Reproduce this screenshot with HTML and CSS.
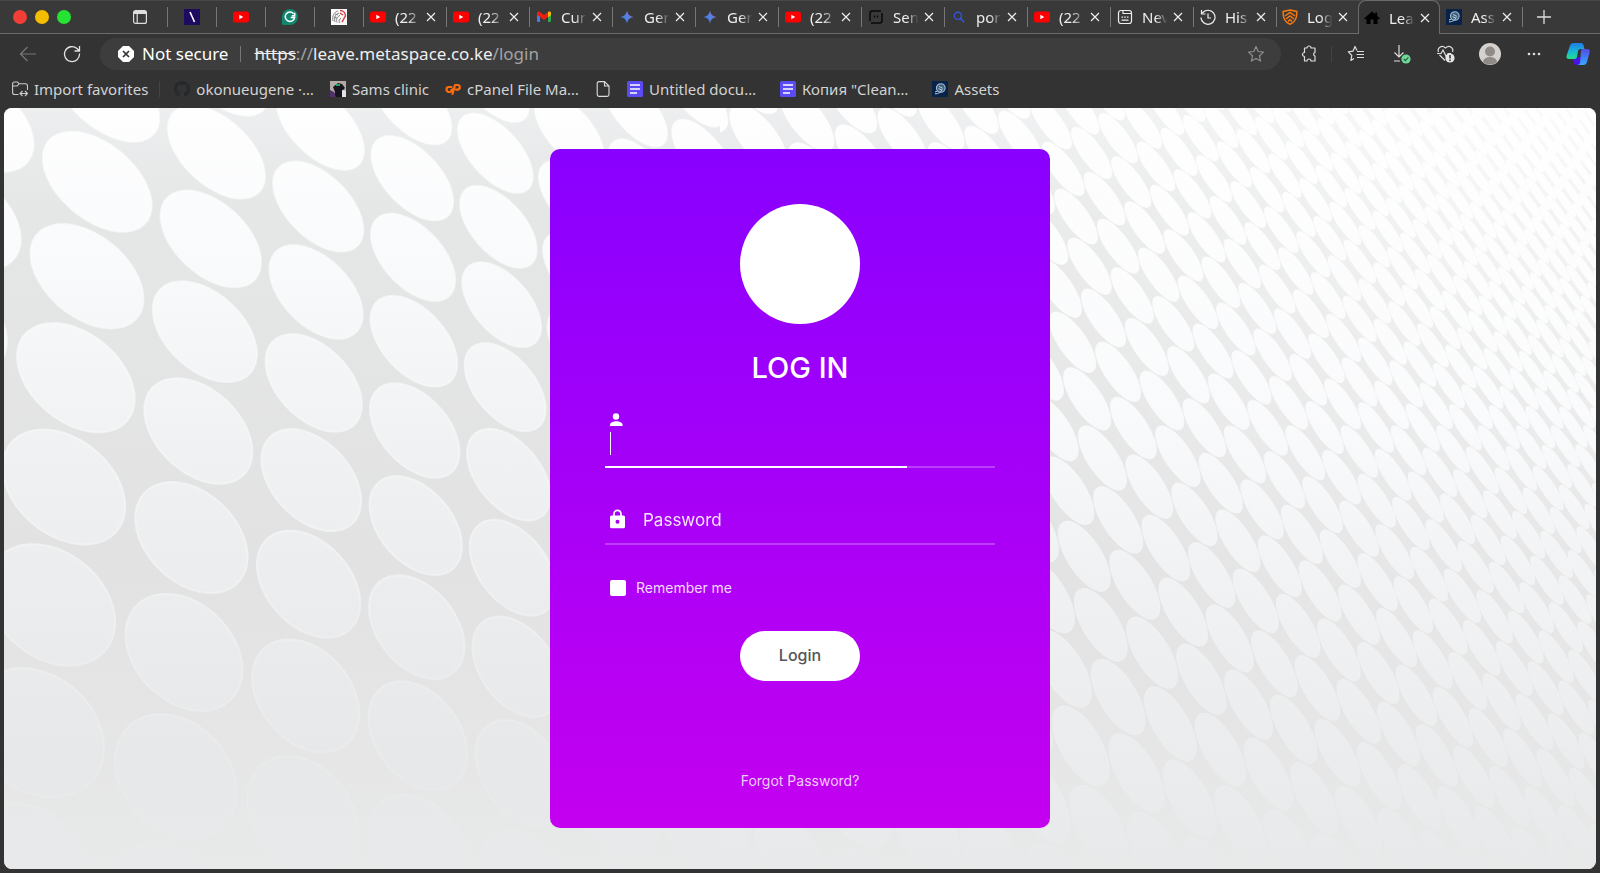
FILE: index.html
```html
<!DOCTYPE html>
<html lang="en">
<head>
<meta charset="utf-8">
<title>Leave - Login</title>
<link rel="stylesheet" href="styles.css">
</head>
<body>
<svg class="defs" aria-hidden="true">
  <defs>
    <linearGradient id="gem" x1="0" y1="1" x2="1" y2="0"><stop offset="0" stop-color="#2f86f6"/><stop offset=".5" stop-color="#5480e0"/><stop offset="1" stop-color="#b365c8"/></linearGradient>
    <linearGradient id="cpA" x1="0" y1="0" x2="0" y2="1"><stop offset="0" stop-color="#1f7be8"/><stop offset=".5" stop-color="#19b4d8"/><stop offset="1" stop-color="#22e08c"/></linearGradient>
    <linearGradient id="cpB" x1="0" y1="0" x2="0" y2="1"><stop offset="0" stop-color="#5a48e8"/><stop offset=".5" stop-color="#3f7df5"/><stop offset="1" stop-color="#3ca6ff"/></linearGradient>
    <symbol id="yt" viewBox="0 0 16 16"><rect y="2.500" width="16" height="11" rx="2.500" fill="#f00"/><path d="M6.300 5.800v4.400L10.300 8z" fill="#fff"/></symbol>
    <symbol id="spark" viewBox="0 0 16 16"><path d="M8 1.500C8.600 5.400 10.600 7.400 14.500 8 10.600 8.600 8.600 10.600 8 14.500 7.400 10.600 5.400 8.600 1.500 8 5.400 7.400 7.400 5.400 8 1.500z" fill="url(#gem)"/></symbol>
    <symbol id="x" viewBox="0 0 10 10"><path d="M1 1l8 8M9 1L1 9" stroke="#eee" stroke-width="1.200" fill="none"/></symbol>
    <symbol id="asset" viewBox="0 0 16 16"><rect width="16" height="16" fill="#07234a"/><circle cx="8.800" cy="7" r="4.300" fill="#40617f" stroke="#a9c0d2" stroke-width="1.100"/><path d="M3 12.800c3 .2 6.800-1.600 7.200-5.200M7 5.500l3.500 1.600M6.600 7.600l3 1.400M3 11l2.500-1" stroke="#b9ccdb" fill="none"/></symbol>
    <symbol id="note" viewBox="0 0 16 16"><rect width="16" height="16" rx="1.500" fill="#5b4bf5"/><path d="M3 4h10M3 8h10M3 12h7" stroke="#fff" stroke-width="1.600"/></symbol>
  </defs>
</svg>
<div class="browser">
  <header class="strip">
    <div class="lights"><button class="light red" aria-label="Close"></button><button class="light amber" aria-label="Minimize"></button><button class="light green" aria-label="Maximize"></button></div>
    <button class="tab-actions" aria-label="Tab actions"><svg width="16" height="16" viewBox="0 0 16 16" fill="none" stroke="#ddd" stroke-width="1.200"><rect x="1.600" y="1.600" width="12.800" height="12.800" rx="2"/><path d="M1.600 4.500h12.800M5.200 4.500v9.800"/><path d="M2 3h12" stroke-width="2"/></svg></button>
    <nav class="tabs">
      <a href="#" class="pin"><svg width="16" height="16"><rect width="16" height="16" fill="#1c0b5e"/><path d="M6 3l4.500 10" stroke="#fff" stroke-width="1.600"/></svg></a>
      <a href="#" class="pin"><svg width="16" height="16"><use href="#yt"/></svg></a>
      <a href="#" class="pin"><svg width="16" height="16" viewBox="0 0 16 16"><path d="M8 0a8 8 0 0 1 0 16H1.500Q0 16 0 14.500V8A8 8 0 0 1 8 0z" fill="#12876f"/><path d="M11.600 4.700A4.700 4.700 0 1 0 12.600 8.500H8.600M12.700 3.800v3H9.800" stroke="#fff" stroke-width="1.500" fill="none"/></svg></a>
      <a href="#" class="pin"><svg width="16" height="16" viewBox="0 0 16 16"><rect width="16" height="16" fill="#fafafa"/><g fill="none" stroke="#777" stroke-width=".9"><path d="M2 12C1 7 3 3 7 2M4 13c-1-4 0-8 4-9M6 13.500c-1-3 0-6 3-7M8.500 14c-1-2 0-4 1.500-5M4 5l3 1M3 8l3 1"/></g><path d="M9 1.500c3.500 0 5.500 2.500 5.500 5.500-1 1-1.500 3-3.500 6M9 4l3 2" stroke="#cf3b3f" stroke-width="1.400" fill="none"/></svg></a>
      <a href="#" class="tab"><svg class="fav"><use href="#yt"/></svg><span class="label">(22</span><svg class="close"><use href="#x"/></svg></a>
      <a href="#" class="tab"><svg class="fav"><use href="#yt"/></svg><span class="label">(22</span><svg class="close"><use href="#x"/></svg></a>
      <a href="#" class="tab"><svg class="fav" viewBox="0 0 16 16"><path d="M1 3.500h3V13H2.200Q1 13 1 11.800z" fill="#4b7bf0"/><path d="M12 3.500h3v8.300Q15 13 13.800 13H12z" fill="#2fa84f"/><path d="M1 4.200C1 2.500 3 2 4 3l4 3 4-3c1-1 3-.5 3 1.200L12 8l-4 3-4-3-3-2z" fill="#ea1f14"/><path d="M12 3c1-1 3-.5 3 1.200V6l-3 2.200z" fill="#fbbc04"/></svg><span class="label">Cur</span><svg class="close"><use href="#x"/></svg></a>
      <a href="#" class="tab"><svg class="fav"><use href="#spark"/></svg><span class="label">Ger</span><svg class="close"><use href="#x"/></svg></a>
      <a href="#" class="tab"><svg class="fav"><use href="#spark"/></svg><span class="label">Ger</span><svg class="close"><use href="#x"/></svg></a>
      <a href="#" class="tab"><svg class="fav"><use href="#yt"/></svg><span class="label">(22</span><svg class="close"><use href="#x"/></svg></a>
      <a href="#" class="tab"><svg class="fav" viewBox="0 0 16 16" fill="none" stroke="#080808" stroke-width="1.500"><path d="M13 2H4.500Q2 2 2 4.500V12M3 14h8.500q2.500 0 2.500-2.500V4M2 2.300l1 .7M13 13l1 .7"/><path d="M6.500 6.500v2M9.500 6.500v2" stroke-width="1.300"/></svg><span class="label">Sen</span><svg class="close"><use href="#x"/></svg></a>
      <a href="#" class="tab"><svg class="fav" viewBox="0 0 16 16" fill="none" stroke="#3156dc"><circle cx="6.800" cy="6.800" r="3.600" stroke-width="1.400"/><path d="M9.500 9.500l3.600 3.600" stroke-width="1.700"/></svg><span class="label">por</span><svg class="close"><use href="#x"/></svg></a>
      <a href="#" class="tab"><svg class="fav"><use href="#yt"/></svg><span class="label">(22</span><svg class="close"><use href="#x"/></svg></a>
      <a href="#" class="tab"><svg class="fav" viewBox="0 0 16 16" fill="none" stroke="#eee" stroke-width="1.200"><rect x="1.500" y="1.500" width="13" height="13" rx="2.500"/><path d="M6 2v2.500h8.500M4.500 8.200h1.600M7.200 8.200h1.600M9.900 8.200h1.600M4.500 11.200h7"/></svg><span class="label">Nev</span><svg class="close"><use href="#x"/></svg></a>
      <a href="#" class="tab"><svg class="fav" viewBox="0 0 16 16" fill="none" stroke="#eee" stroke-width="1.200"><path d="M2.300 4.200A7 7 0 1 1 1 8.500M1.500 1v4h4M8 4.500V9h3"/></svg><span class="label">His</span><svg class="close"><use href="#x"/></svg></a>
      <a href="#" class="tab narrow"><svg class="fav" viewBox="0 0 16 16" fill="none" stroke="#f57a12" stroke-width="1.500"><path d="M8 .9l6.800 1.500c.4 6-2.300 11-6.800 12.900C3.500 13.400.8 8.400 1.200 2.400z"/><path d="M3 7l5-3.500L13 7M4 10l4-3 4 3M6 12.400l2-1.700 2 1.700"/></svg><span class="label">Log</span><svg class="close"><use href="#x"/></svg></a>
      <a href="#" class="tab narrow active" aria-current="page"><svg class="fav" viewBox="0 0 16 16"><path d="M8 1.500L0 8.600l1 1L2.500 8.400V14h4V9.500h3V14h4V8.400L15 9.600l1-1-2.800-2.500V2.500h-2v1.800z" fill="#000"/></svg><span class="label">Lea</span><svg class="close"><use href="#x"/></svg></a>
      <a href="#" class="tab narrow"><svg class="fav"><use href="#asset"/></svg><span class="label">Ass</span><svg class="close"><use href="#x"/></svg></a>
    </nav>
    <button class="new-tab" aria-label="New tab"><svg width="14" height="14"><path d="M7 0v14M0 7h14" stroke="#ddd" stroke-width="1.300"/></svg></button>
  </header>
  <div class="toolbar">
    <button class="tool" aria-label="Back"><svg width="18" height="16" fill="none" stroke="#777" stroke-width="1.200"><path d="M17 8H1.500M8.500 1l-7 7 7 7"/></svg></button>
    <button class="tool" aria-label="Refresh"><svg width="18" height="18" fill="none" stroke="#e2e2e2" stroke-width="1.300"><path d="M16.500 8.500A7.500 7.500 0 1 1 14 3.500l2 2M16.500 1v5h-5"/></svg></button>
    <div class="address">
      <svg width="16" height="16"><path d="M5 0h6l5 5v6l-5 5H5l-5-5V5z" fill="#fff"/><path d="M5 5l6 6M11 5l-6 6" stroke="#333" stroke-width="1.700"/></svg>
      <span class="insecure">Not secure</span>
      <span class="bar"></span>
      <span class="url"><s>https</s><i>://</i>leave.metaspace.co.ke<i>/login</i></span>
      <button class="star" aria-label="Add to favorites"><svg width="18" height="18" fill="none" stroke="#8d8d8d" stroke-width="1.200" stroke-linejoin="round"><path d="M9 1.500l2.200 5 5.300.6-4 3.600 1.100 5.400L9 13.400l-4.600 2.700 1.100-5.400-4-3.600 5.300-.6z"/></svg></button>
    </div>
    <div class="actions">
      <button class="tool" aria-label="Extensions"><svg width="18" height="18" fill="none" stroke="#ddd" stroke-width="1.200" stroke-linejoin="round"><path d="M4.500 3H7a2 2 0 0 1 4 0h4v4.500a1.800 1.800 0 0 0 0 3.500v5h-4a2 2 0 0 0-4 0H4.500v-4.500a2 2 0 1 1 0-4z"/></svg></button>
      <span class="rule"></span>
      <button class="tool" aria-label="Favorites"><svg width="18" height="18" fill="none" stroke="#ddd" stroke-width="1.200" stroke-linejoin="round"><path d="M10 5.500L8 1.500l-2 4.700-4.700.6 3.500 3.500-.9 5.200L7 13.600M10 6.500h7M9.500 9.500H17M10 12.500h7"/></svg></button>
      <button class="tool" aria-label="Downloads"><svg width="18" height="20" fill="none" stroke="#ddd" stroke-width="1.200"><path d="M6 1v12M1.500 8.500L6 13l4.500-4.500M1 17h6"/><circle cx="13" cy="15" r="4.600" fill="#6fd99a" stroke="none"/><path d="M10.800 15l1.600 1.600 3-3.200" stroke="#245c3a"/></svg></button>
      <button class="tool" aria-label="Browser essentials"><svg width="20" height="20" viewBox="0 0 20 20" fill="none" stroke="#ddd" stroke-width="1.200"><path d="M2.500 8C1 4 5.500.5 9.500 4 13.500.5 18 4 16.500 8M3.500 11l5.500 5.500M1 9.500h4L7 6l3.500 7L12 9.500h3"/><circle cx="14" cy="14" r="4.600" fill="#e6e6e6" stroke="none"/><path d="M14 11v3.500M14 15.500v1.400" stroke="#333" stroke-width="1.500"/></svg></button>
      <button class="tool" aria-label="Profile"><svg width="22" height="22"><circle cx="11" cy="11" r="11" fill="#d5d1cd"/><circle cx="11" cy="8.500" r="5" fill="#908b87"/><path d="M4 19a7 5 0 0 1 14 0 11 11 0 0 1-14 0z" fill="#908b87"/></svg></button>
      <button class="tool" aria-label="Settings and more"><svg width="14" height="4" fill="#ddd"><circle cx="2" cy="2" r="1.300"/><circle cx="7" cy="2" r="1.300"/><circle cx="12" cy="2" r="1.300"/></svg></button>
      <button class="tool" aria-label="Copilot"><svg width="24" height="24" viewBox="0 0 24 24"><path d="M6 15h9l1 4-3 4h-3q-2 0-2.500-3z" fill="#4b12e0"/><path d="M7 1h8q2 0 2.500 2l1 4h-4q-2 0-2.500 2l-1 6q-.5 2-2.500 2H3q-3 0-2.500-3L4 3.500Q4.700 1 7 1z" fill="url(#cpA)"/><path d="M16 7h5q3 0 2.700 3L21 20q-1 3-3.500 3H11q2.500 0 3-2l1-12q.3-2 1-2z" fill="url(#cpB)"/></svg></button>
    </div>
  </div>
  <nav class="bookmarks">
    <a href="#"><svg width="16" height="16" viewBox="0 0 16 16" fill="none" stroke="#ccc" stroke-width="1.100"><path d="M6.500 13.500H2.500Q.6 13.500.6 11.500V3Q.6 1 2.500 1H5q1 0 1.500 1l.5.800H13.500Q15.500 2.800 15.500 5V9M.6 5H5l2-2.200M10.500 10l-2.500 2.500 2.500 2.500M13 10l2.500 2.500L13 15M8 12.500h7"/></svg>Import favorites</a>
    <span class="rule"></span>
    <a href="#"><svg width="16" height="16" viewBox="0 0 16 16"><path fill="#24292e" d="M8 0C3.580 0 0 3.580 0 8c0 3.540 2.290 6.530 5.470 7.590.4.070.550-.170.550-.380v-1.490c-2.010.370-2.530-.490-2.690-.940-.090-.230-.480-.940-.820-1.130-.280-.150-.680-.520 0-.530.630-.010 1.080.580 1.230.820.720 1.210 1.870.870 2.330.660.070-.520.280-.870.510-1.070-1.780-.200-3.640-.890-3.640-3.950 0-.870.310-1.590.820-2.150-.080-.200-.360-1.020.080-2.120 0 0 .670-.210 2.200.820a7.600 7.600 0 0 1 4 0c1.530-1.040 2.200-.820 2.200-.820.440 1.100.160 1.920.080 2.120.510.560.820 1.270.820 2.150 0 3.070-1.870 3.750-3.650 3.950.290.250.540.730.540 1.480v2.200c0 .210.150.460.550.380A8 8 0 0 0 16 8c0-4.420-3.580-8-8-8z"/></svg>okonueugene ·…</a>
    <a href="#"><svg width="16" height="16"><rect width="16" height="16" fill="#b3aaa5"/><path d="M3 6l5-4 4 1 3 4-3 3v6H4l1-5z" fill="#16141c"/><path d="M0 9l4 2 2 5H0z" fill="#51306e"/><path d="M12 9l4 1v6h-4z" fill="#e3e3e3"/><path d="M6 3h4v2H6z" fill="#23a067"/></svg>Sams clinic</a>
    <a href="#"><svg width="16" height="16" viewBox="0 0 16 16" fill="none" stroke="#ff6c0c" stroke-width="2.200" stroke-linecap="round" stroke-linejoin="round"><path d="M6.500 6H4.200a2.500 2.500 0 0 0-.4 5H5M8 11H7.500c-1.800 0-1.600-2.400 0-2.600L9 8M7.500 13L10 4h2.500a2.300 2.300 0 0 1 0 4.600H11"/></svg>cPanel File Ma…</a>
    <a href="#" aria-label="Untitled page"><svg width="16" height="16" fill="none" stroke="#ddd" stroke-width="1.100"><path d="M4 .6h5.500L14 5v8.500q0 1.900-1.900 1.900H4q-1.800 0-1.800-1.900v-11Q2.200.6 4 .6zM9.500.6V5H14"/></svg></a>
    <a href="#"><svg width="16" height="16"><use href="#note"/></svg>Untitled docu…</a>
    <a href="#" class="wide"><svg width="16" height="16"><use href="#note"/></svg>Копия "Clean…</a>
    <a href="#" class="wide"><svg width="16" height="16"><use href="#asset"/></svg>Assets</a>
  </nav>
  <main class="page">
    <svg class="backdrop" viewBox="4 108 1592 761" preserveAspectRatio="xMidYMid slice" aria-hidden="true">
      <defs>
        <linearGradient id="gap" gradientUnits="userSpaceOnUse" x1="0" y1="108" x2="0" y2="869"><stop offset="0" stop-color="#eceeef"/><stop offset=".14" stop-color="#e5e6e6"/><stop offset=".6" stop-color="#e2e2e2"/><stop offset=".8" stop-color="#e5e5e5"/><stop offset="1" stop-color="#e8e9e9"/></linearGradient>
        <linearGradient id="disc" gradientUnits="userSpaceOnUse" x1="0" y1="108" x2="0" y2="869"><stop offset="0" stop-color="#fefefe"/><stop offset=".2" stop-color="#f9fafc"/><stop offset=".45" stop-color="#eff1f3"/><stop offset=".7" stop-color="#e9ebec"/><stop offset=".85" stop-color="#e7e8e9"/><stop offset="1" stop-color="#e8e9ea"/></linearGradient>
        <linearGradient id="discRight" gradientUnits="userSpaceOnUse" x1="0" y1="108" x2="0" y2="869"><stop offset="0" stop-color="#fefefe"/><stop offset=".4" stop-color="#f8f9fb"/><stop offset=".6" stop-color="#eff1f3"/><stop offset="1" stop-color="#e8e9ea"/></linearGradient>
        <linearGradient id="rim" gradientUnits="userSpaceOnUse" x1="0" y1="108" x2="0" y2="869"><stop offset="0" stop-color="#fff" stop-opacity=".6"/><stop offset=".6" stop-color="#f4f5f6" stop-opacity=".7"/><stop offset="1" stop-color="#eee" stop-opacity=".1"/></linearGradient>
        <radialGradient id="glow" gradientUnits="userSpaceOnUse" cx="1520" cy="60" r="720"><stop offset="0" stop-color="#fff" stop-opacity=".75"/><stop offset=".4" stop-color="#fff" stop-opacity=".35"/><stop offset="1" stop-color="#fff" stop-opacity="0"/></radialGradient>
        <clipPath id="leftHalf"><rect x="0" y="100" width="720" height="780"/></clipPath>
        <clipPath id="rightHalf"><rect x="720" y="100" width="880" height="780"/></clipPath>
      </defs>
      <rect x="0" y="100" width="1600" height="780" fill="url(#gap)"/>
      <path id="discsLeft" clip-path="url(#leftHalf)" fill="url(#disc)" stroke="url(#rim)" stroke-width="2"/>
      <path id="discsRight" clip-path="url(#rightHalf)" fill="url(#discRight)" stroke="url(#rim)" stroke-width="1"/>
      <rect x="0" y="100" width="1600" height="780" fill="url(#glow)"/>
    </svg>
    <form class="card">
      <div class="logo"></div>
      <h1>LOG IN</h1>
      <div class="field focused">
        <svg width="20" height="20" viewBox="0 0 20 20" fill="#fff"><circle cx="6" cy="6.500" r="3.200"/><path d="M0 16v-1.300C0 12.600 3.500 11.300 6.300 11.300s6.300 1.300 6.300 3.400V16z"/></svg>
        <input type="text" aria-label="Username">
        <span class="caret"></span>
      </div>
      <div class="field">
        <svg width="16" height="20" viewBox="0 0 16 20"><path d="M4 8V4.800a3.500 3.500 0 0 1 7 0V8" fill="none" stroke="#fff" stroke-width="1.700"/><path d="M1.500 6.500h12q1.500 0 1.500 1.500v9.800q0 1.500-1.500 1.500h-12Q0 19.300 0 17.800V8q0-1.500 1.500-1.500zm6 4.300a2 2 0 1 0 .01 4 2 2 0 0 0-.01-4z" fill="#fff" fill-rule="evenodd"/></svg>
        <input type="password" placeholder="Password" aria-label="Password">
      </div>
      <label class="remember"><input type="checkbox">Remember me</label>
      <button class="login" type="button">Login</button>
      <a class="forgot" href="#">Forgot Password?</a>
    </form>
  </main>
</div>
<script src="script.js"></script>
</body>
</html>
```
FILE: styles.css
```css
* { box-sizing: border-box; }
body { margin: 0; background: #333; font-family: "Noto Sans", "Open Sans", sans-serif; color: #eee; }
button { background: none; border: 0; padding: 0; color: inherit; font: inherit; }
a { color: inherit; text-decoration: none; }
svg { flex: none; display: block; }
.defs { position: absolute; width: 0; height: 0; }
.browser { min-height: 100vh; display: flex; flex-direction: column; }

.strip { display: flex; height: 33px; background: #393939; border-top: 1px solid #484848; }
.lights { display: flex; align-items: center; gap: 8px; padding-left: 13px; }
.light { width: 14px; height: 14px; border-radius: 50%; }
.red { background: #f23e37; }
.amber { background: #f5bd00; }
.green { background: #26e233; }
.tab-actions { margin-left: 61px; width: 35px; display: flex; align-items: center; }
.tabs { display: flex; }
.pin, .tab { position: relative; display: flex; align-items: center; }
.pin { width: 49px; justify-content: center; }
.tab { width: 83px; padding-left: 7px; font-size: 15px; }
.narrow { width: 82px; padding-left: 6px; }
.pin::before, .tab::before { content: ""; position: absolute; left: 0; top: 6px; width: 1px; height: 20px; background: #777; }
.fav { width: 16px; height: 16px; }
.label { width: 30px; margin-left: 9px; white-space: nowrap; -webkit-mask-image: linear-gradient(90deg, #000 45%, transparent 85%); mask-image: linear-gradient(90deg, #000 45%, transparent 85%); }
.close { width: 10px; height: 10px; margin-left: 1px; }
.active { z-index: 1; margin: -1px 0; padding-left: 5px; background: #333; border: 1px solid #6b6b6b; border-bottom: 0; border-radius: 8px 8px 0 0; }
.active::before, .active + .tab::before { display: none; }
.tabs::after { content: ""; width: 1px; height: 20px; margin-top: 6px; background: #777; }
.new-tab { padding: 0 0 0 14px; display: flex; align-items: center; }

.toolbar { display: flex; align-items: center; height: 41px; border-top: 1px solid #6b6b6b; background: #333; }
.tool { display: flex; align-items: center; justify-content: center; width: 44px; height: 32px; }
.toolbar > .tool:first-child { margin-left: 6px; }
.address { flex: 1; display: flex; align-items: center; height: 32px; margin-left: 6px; padding: 0 16px 0 18px; border-radius: 16px; background: #3d3d3d; font-size: 17px; line-height: 20px; white-space: nowrap; }
.insecure { margin-left: 8px; color: #fff; }
.bar { width: 1px; height: 16px; margin: 0 13px 0 12px; background: #777; }
.url i { font-style: normal; color: #a3a3a3; }
.star { margin-left: auto; }
.actions { display: flex; align-items: center; padding-left: 6px; }
.rule { width: 1px; height: 16px; background: #444; }
.actions .rule + .tool { width: 48px; }

.bookmarks { display: flex; align-items: center; height: 34px; padding: 0 4px 4px; font-size: 15px; line-height: 20px; color: #d2d2d2; }
.bookmarks a { display: flex; align-items: center; gap: 6px; padding: 0 8px; white-space: nowrap; }
.bookmarks .rule { margin: 0 6px 0 3px; }
.bookmarks .wide { padding-left: 16px; }

.page { position: relative; flex: 1; margin: 0 4px 4px; padding: 41px 0; border-radius: 8px; overflow: hidden; }
.backdrop { position: absolute; inset: 0; width: 100%; height: 100%; }
.card { position: relative; width: 500px; margin: 0 auto; padding: 55px 55px 37px; border-radius: 10px; background: linear-gradient(#8900ff, #c400f0); font-family: Inter, "Open Sans", sans-serif; color: #fff; display: flex; flex-direction: column; }
.logo { width: 120px; height: 120px; margin: 0 auto; border-radius: 50%; background: #fff; }
h1 { margin: 24px 0 0; font-size: 29px; line-height: 40px; font-weight: 500; text-align: center; }
.field { position: relative; display: flex; align-items: center; height: 47px; margin-top: 30px; padding: 0 5px; border-bottom: 2px solid rgba(255, 255, 255, .24); }
.field input { flex: 1; min-width: 0; height: 43px; margin: 0 0 2px 17px; padding: 0; border: 0; outline: 0; background: none; color: #fff; font: 17px Inter, "Open Sans", sans-serif; }
.field input::placeholder { color: #fff; opacity: .9; }
.field svg { margin-bottom: 4px; }
.focused { height: 60px; margin-top: 20px; align-items: flex-start; }
.focused svg { margin-top: 2px; }
.focused::after { content: ""; position: absolute; left: 0; bottom: -2px; width: 302px; height: 2px; background: #fff; }
.caret { position: absolute; left: 5px; top: 24px; width: 1px; height: 23px; background: #fff; }
.remember { display: flex; align-items: center; gap: 10px; margin: 33px 0 0 5px; font-size: 14px; line-height: 20px; color: #f1dcff; }
.remember input { appearance: none; width: 16px; height: 16px; margin: 0; border-radius: 2px; background: #fff; }
.login { align-self: center; width: 120px; height: 50px; margin-top: 33px; padding-bottom: 2px; border-radius: 25px; background: #fff; color: #555; font-size: 16px; font-weight: 500; }
.forgot { align-self: center; margin-top: 90px; font-size: 14px; line-height: 20px; color: #eecdf8; }
```
FILE: script.js
```js
// Each sample is [column, row, x, y]: the centre of one disc of the panel.
const leftDiscs = [
  [0, 0, 97.5, 181], [0, 1, 88, 275.7], [0, 2, 77, 377], [0, 3, 65.7, 486], [0, 4, 53, 604],
  [1, -1, 216.8, 153.3], [1, 0, 211.8, 239.3], [1, 2, 200.4, 431], [1, 3, 193.2, 536.8], [1, 5, 174.3, 776.3],
  [2, -1, 318.6, 206], [2, 0, 317.9, 292.7], [2, 2, 312.9, 480], [2, 4, 307.1, 694.3],
  [3, -2, 412, 177.3], [3, 0, 415.5, 341.7], [3, 2, 417.5, 526], [3, 4, 418.7, 735.7],
  [4, -3, 495.2, 153], [4, -1, 502.1, 303.8], [4, 0, 506.3, 387], [4, 4, 521, 772]
];
const rightDiscs = [
  [0, -2, 1076, 216.7], [0, 0, 1103.9, 317.7], [0, 2, 1133.4, 428], [0, 4, 1166, 547.3], [0, 6, 1202, 678.7], [0, 8, 1241.4, 823.7],
  [2, 0, 1187.9, 374.7], [4, 0, 1267, 427.3], [6, 0, 1340.7, 477.7], [8, 0, 1410.4, 523.7], [10, 0, 1476, 566.7], [11, 0, 1507, 587],
  [3, -1, 1212.9, 351.3], [3, -3, 1183.6, 255.3], [3, -5, 1156.4, 166.3],
  [5, -5, 1228.6, 219.7], [7, -5, 1296, 271], [9, -5, 1360, 319.3]
];

// Least-squares perspective mapping from (column, row) to (x, y).
function fitPerspective(samples) {
  const m = Array.from({ length: 8 }, () => new Array(9).fill(0));
  const add = (row, value) => {
    for (let i = 0; i < 8; i++) {
      for (let j = 0; j < 8; j++) m[i][j] += row[i] * row[j];
      m[i][8] += row[i] * value;
    }
  };
  for (const [u, v, x, y] of samples) {
    add([u, v, 1, 0, 0, 0, -u * x, -v * x], x);
    add([0, 0, 0, u, v, 1, -u * y, -v * y], y);
  }
  for (let c = 0; c < 8; c++) {
    let p = c;
    for (let r = c + 1; r < 8; r++) if (Math.abs(m[r][c]) > Math.abs(m[p][c])) p = r;
    [m[c], m[p]] = [m[p], m[c]];
    for (let r = 0; r < 8; r++) {
      if (r === c) continue;
      const f = m[r][c] / m[c][c];
      for (let k = c; k < 9; k++) m[r][k] -= f * m[c][k];
    }
  }
  const h = m.map((row, i) => row[8] / row[i]);
  return (u, v) => {
    const w = h[6] * u + h[7] * v + 1;
    return [(h[0] * u + h[1] * v + h[2]) / w, (h[3] * u + h[4] * v + h[5]) / w, w];
  };
}

function drawDiscs(id, samples, columns, rows, radius) {
  const project = fitPerspective(samples);
  let d = "";
  for (let u = columns[0]; u <= columns[1]; u++) {
    for (let v = rows[0]; v <= rows[1]; v++) {
      const [x, y, w] = project(u, v);
      if (w < 0.1 || x < -120 || x > 1720 || y < 0 || y > 980) continue;
      for (let k = 0; k < 40; k++) {
        const a = (k * Math.PI) / 20;
        const p = project(u + radius * Math.cos(a), v + radius * Math.sin(a));
        d += (k ? "L" : "M") + p[0].toFixed(1) + " " + p[1].toFixed(1);
      }
      d += "Z";
    }
  }
  document.getElementById(id).setAttribute("d", d);
}

drawDiscs("discsLeft", leftDiscs, [-3, 9], [-12, 10], 0.46);
drawDiscs("discsRight", rightDiscs, [-10, 34], [-45, 20], 0.48);
```
